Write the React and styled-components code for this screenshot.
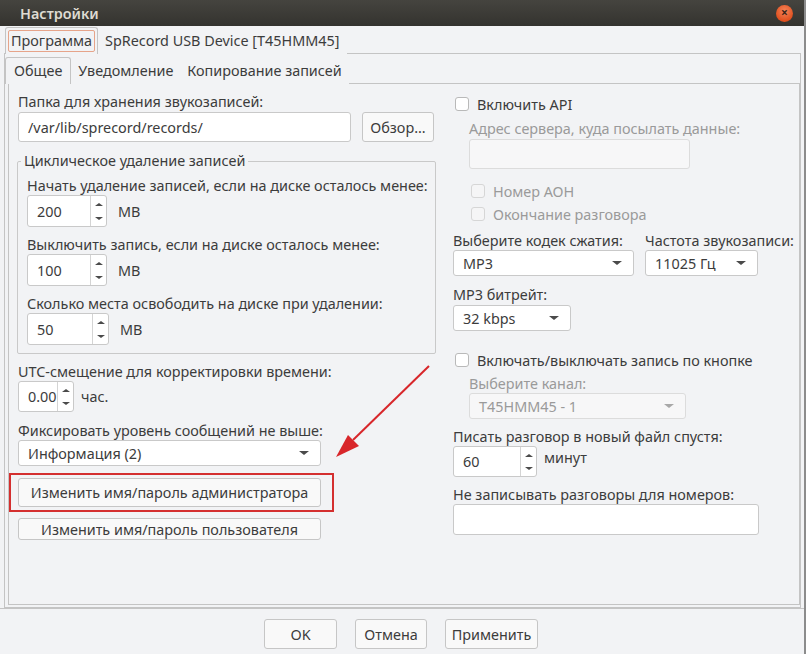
import React from "react";
import styled, { createGlobalStyle } from "styled-components";

const GlobalStyle = createGlobalStyle`
  html, body {
    margin: 0;
    padding: 0;
    background: #f2f3f5;
  }
  body {
    font-family: "Noto Sans", "Open Sans", sans-serif;
    font-size: 14.4px;
    color: #3c3c3c;
  }
  * {
    box-sizing: border-box;
  }
`;

const Window = styled.div`
  position: relative;
  width: 806px;
  height: 654px;
  display: flex;
  flex-direction: column;
  background: #f2f3f5;
  border-right: 2px solid #8c8c8c;
  overflow: hidden;
`;

const TitleBar = styled.div`
  height: 26px;
  flex: none;
  display: flex;
  align-items: center;
  justify-content: space-between;
  padding: 0 11px 0 20px;
  background: linear-gradient(#45443f, #34332f);
  color: #dfdbd2;
  font-weight: 600;
  font-size: 14.4px;
`;

const CloseBtn = styled.div`
  width: 17px;
  height: 17px;
  border-radius: 50%;
  background: radial-gradient(circle at 50% 35%, #f4845a, #e0501f 70%);
  display: flex;
  align-items: center;
  justify-content: center;
  color: #3b2419;
  font-size: 12px;
  font-weight: 700;
  line-height: 1;
`;

const TabBar = styled.div`
  display: flex;
  align-items: flex-end;
  height: ${(p) => p.$h}px;
  padding-left: ${(p) => p.$pl}px;
  flex: none;
`;

const Tab = styled.div`
  height: ${(p) => p.$h}px;
  display: flex;
  align-items: center;
  padding: 0 ${(p) => (p.$active ? 2 : 5)}px;
  border: 1px solid ${(p) => (p.$active ? "#c4c4c4" : "transparent")};
  border-bottom: none;
  border-radius: 3px 3px 0 0;
  background: #f2f3f5;
  margin-bottom: -1px;
  position: relative;
  z-index: 1;
  white-space: nowrap;
`;

const TabText = styled.span`
  padding: 1px ${(p) => p.$pad}px;
  border: 1px solid ${(p) => (p.$focus ? "#e6a48a" : "transparent")};
  border-radius: 2px;
  line-height: 18px;
`;

const OuterPane = styled.div`
  flex: 1;
  margin: 0 3px 0 4px;
  border: 1px solid #c4c4c4;
  display: flex;
  flex-direction: column;
`;

const InnerPane = styled.div`
  position: relative;
  flex: 1;
  margin: 0 0 2px 3px;
  border: 1px solid #c4c4c4;
  display: grid;
  grid-template-columns: 417px 1fr;
  column-gap: 18px;
  padding: 9px 0 0 9px;
`;

const Column = styled.div`
  display: flex;
  flex-direction: column;
  align-items: flex-start;
`;

const Label = styled.div`
  line-height: 18px;
  height: 18px;
  white-space: nowrap;
  margin-top: ${(p) => p.$mt || 0}px;
  margin-left: ${(p) => p.$ml || 0}px;
  color: ${(p) => (p.$disabled ? "#9a9a9a" : "#3c3c3c")};
`;

const Row = styled.div`
  display: flex;
  align-items: ${(p) => p.$align || "center"};
  gap: ${(p) => p.$gap || 0}px;
  margin-top: ${(p) => p.$mt || 0}px;
  margin-left: ${(p) => p.$ml || 0}px;
`;

const TextInput = styled.div`
  width: ${(p) => p.$w}px;
  height: ${(p) => p.$h}px;
  margin-top: ${(p) => p.$mt || 0}px;
  margin-left: ${(p) => p.$ml || 0}px;
  background: ${(p) => (p.$disabled ? "#f7f7f8" : "#fff")};
  border: 1px solid ${(p) => (p.$disabled ? "#dcdcdc" : "#c9c9c9")};
  border-radius: 3px;
  display: flex;
  align-items: center;
  padding-left: 9px;
`;

const Button = styled.div`
  width: ${(p) => p.$w}px;
  height: ${(p) => p.$h}px;
  margin-top: ${(p) => p.$mt || 0}px;
  background: #f9f9f9;
  border: 1px solid #c6c6c6;
  border-radius: 3px;
  display: flex;
  align-items: center;
  justify-content: center;
  white-space: nowrap;
`;

const Group = styled.fieldset`
  margin: 10px 0 0 -1px;
  width: 419px;
  padding: 7px 9px 8px 9px;
  border: 1px solid #c9c9c9;
  border-radius: 2px;
  display: flex;
  flex-direction: column;
  align-items: flex-start;
  min-width: 0;
`;

const Legend = styled.legend`
  padding: 0 3px;
  margin-left: -6px;
  line-height: 18px;
`;

const SpinBox = styled.div`
  width: ${(p) => p.$w}px;
  height: ${(p) => p.$h}px;
  background: #fff;
  border: 1px solid #c9c9c9;
  border-radius: 3px;
  display: flex;
  overflow: hidden;
`;

const SpinValue = styled.div`
  flex: 1;
  display: flex;
  align-items: center;
  padding-left: 9px;
  overflow: hidden;
  white-space: nowrap;
`;

const SpinArrows = styled.div`
  width: 16px;
  flex: none;
  border-left: 1px solid #d4d4d4;
  display: flex;
  flex-direction: column;
  align-items: center;
  justify-content: space-between;
  padding: 7px 0 6px;
`;

const Tri = styled.div`
  width: 0;
  height: 0;
  border-left: ${(p) => p.$s}px solid transparent;
  border-right: ${(p) => p.$s}px solid transparent;
  ${(p) => (p.$up ? "border-bottom" : "border-top")}: ${(p) => p.$s - 1}px solid
    ${(p) => p.$color || "#4a4a4a"};
`;

const Combo = styled.div`
  width: ${(p) => p.$w}px;
  height: 26px;
  margin-left: ${(p) => p.$ml || 0}px;
  background: ${(p) => (p.$disabled ? "#f7f7f8" : "#fff")};
  border: 1px solid ${(p) => (p.$disabled ? "#dcdcdc" : "#c9c9c9")};
  border-radius: 3px;
  display: flex;
  align-items: center;
  justify-content: space-between;
  padding: 0 11px 0 9px;
  color: ${(p) => (p.$disabled ? "#9a9a9a" : "#3c3c3c")};
  white-space: nowrap;
`;

const CheckRow = styled.div`
  display: flex;
  align-items: center;
  height: 18px;
  margin-top: ${(p) => p.$mt || 0}px;
  margin-left: ${(p) => p.$ml || 0}px;
  color: ${(p) => (p.$disabled ? "#9a9a9a" : "#3c3c3c")};
  white-space: nowrap;
`;

const CheckBox = styled.div`
  width: 14px;
  height: 14px;
  margin-right: 8px;
  border-radius: 3px;
  background: ${(p) => (p.$disabled ? "#f5f5f6" : "#fff")};
  border: 1px solid ${(p) => (p.$disabled ? "#d6d6d6" : "#b9b9b9")};
`;

const Unit = styled.span`
  margin-left: ${(p) => p.$ml}px;
  margin-top: ${(p) => p.$mt || 0}px;
`;

const Highlight = styled.div`
  margin: 7px 0 0 -9px;
  padding: 3px 11px 3px 7px;
  border: 2px solid #d42f2f;
`;

const Field = styled.div`
  display: flex;
  flex-direction: column;
  align-items: flex-start;
`;

const Annotation = styled.svg`
  position: absolute;
  left: 320px;
  top: 280px;
  pointer-events: none;
`;

const Footer = styled.div`
  height: 46px;
  flex: none;
  border-top: 1px solid #c4c4c4;
  display: flex;
  justify-content: center;
  align-items: flex-start;
  padding-top: 10px;
  padding-right: 2px;
  gap: 18px;
`;

const Spin = ({ w, h = 32, value }) => (
  <SpinBox $w={w} $h={h}>
    <SpinValue>{value}</SpinValue>
    <SpinArrows>
      <Tri $up $s={4} />
      <Tri $s={4} />
    </SpinArrows>
  </SpinBox>
);

const Select = ({ w, value, disabled, ml }) => (
  <Combo $w={w} $disabled={disabled} $ml={ml}>
    <span>{value}</span>
    <Tri $s={5} $color={disabled ? "#a8a8a8" : "#4a4a4a"} />
  </Combo>
);

const Check = ({ label, disabled, mt, ml }) => (
  <CheckRow $mt={mt} $ml={ml} $disabled={disabled}>
    <CheckBox $disabled={disabled} />
    {label}
  </CheckRow>
);

export default function App() {
  return (
    <Window>
      <GlobalStyle />
      <TitleBar>
        <span>Настройки</span>
        <CloseBtn>×</CloseBtn>
      </TitleBar>

      <TabBar $h={27} $pl={5}>
        <Tab $active $h={27}>
          <TabText $focus $pad={2}>Программа</TabText>
        </Tab>
        <Tab $h={27}>
          <TabText $pad={0}>SpRecord USB Device [T45HMM45]</TabText>
        </Tab>
      </TabBar>

      <OuterPane>
        <TabBar $h={29} $pl={0}>
          <Tab $active $h={27}>
            <TabText $pad={5}>Общее</TabText>
          </Tab>
          <Tab $h={27}>
            <TabText $pad={0}>Уведомление</TabText>
          </Tab>
          <Tab $h={27}>
            <TabText $pad={0}>Копирование записей</TabText>
          </Tab>
        </TabBar>

        <InnerPane>
          <Column>
            <Label>Папка для хранения звукозаписей:</Label>
            <Row $mt={1} $gap={11}>
              <TextInput $w={333} $h={30}>
                /var/lib/sprecord/records/
              </TextInput>
              <Button $w={72} $h={30}>
                Обзор...
              </Button>
            </Row>

            <Group>
              <Legend>Циклическое удаление записей</Legend>
              <Label>Начать удаление записей, если на диске осталось менее:</Label>
              <Row>
                <Spin w={80} value="200" />
                <Unit $ml={11}>MB</Unit>
              </Row>
              <Label $mt={9}>Выключить запись, если на диске осталось менее:</Label>
              <Row>
                <Spin w={80} value="100" />
                <Unit $ml={11}>MB</Unit>
              </Row>
              <Label $mt={9}>Сколько места освободить на диске при удалении:</Label>
              <Row>
                <Spin w={82} value="50" />
                <Unit $ml={11}>MB</Unit>
              </Row>
            </Group>

            <Label $mt={9}>UTC-смещение для корректировки времени:</Label>
            <Row>
              <Spin w={56} h={31} value="0.00" />
              <Unit $ml={7}>час.</Unit>
            </Row>

            <Label $mt={10}>Фиксировать уровень сообщений не выше:</Label>
            <Select w={303} value="Информация (2)" />

            <Highlight>
              <Button $w={303} $h={29}>
                Изменить имя/пароль администратора
              </Button>
            </Highlight>
            <Button $w={303} $h={22} $mt={6}>
              Изменить имя/пароль пользователя
            </Button>
          </Column>

          <Column>
            <Check label="Включить API" mt={2} ml={2} />
            <Label $mt={7} $ml={16} $disabled>
              Адрес сервера, куда посылать данные:
            </Label>
            <TextInput $w={221} $h={30} $mt={1} $ml={16} $disabled />
            <Check label="Номер АОН" mt={13} ml={18} disabled />
            <Check label="Окончание разговора" mt={5} ml={18} disabled />

            <Row $mt={9} $gap={11} $align="flex-start">
              <Field>
                <Label>Выберите кодек сжатия:</Label>
                <Select w={181} value="MP3" />
              </Field>
              <Field>
                <Label>Частота звукозаписи:</Label>
                <Select w={113} value="11025 Гц" />
              </Field>
            </Row>

            <Label $mt={10}>MP3 битрейт:</Label>
            <Row $mt={1}>
              <Select w={118} value="32 kbps" />
            </Row>

            <Check label="Включать/выключать запись по кнопке" mt={20} ml={2} />
            <Label $mt={6} $ml={16} $disabled>
              Выберите канал:
            </Label>
            <Select w={217} ml={16} value="T45HMM45 - 1" disabled />

            <Label $mt={9}>Писать разговор в новый файл спустя:</Label>
            <Row $align="flex-start">
              <Spin w={84} h={31} value="60" />
              <Unit $ml={7} $mt={2}>минут</Unit>
            </Row>

            <Label $mt={9}>Не записывать разговоры для номеров:</Label>
            <TextInput $w={306} $h={31} />
          </Column>

          <Annotation width="120" height="120" viewBox="0 0 120 120">
            <line x1="100" y1="2" x2="24" y2="76" stroke="#d8262a" strokeWidth="2" />
            <polygon points="7,93 30,82 19,71" fill="#d8262a" />
          </Annotation>
        </InnerPane>
      </OuterPane>

      <Footer>
        <Button $w={73} $h={30}>OK</Button>
        <Button $w={72} $h={30}>Отмена</Button>
        <Button $w={93} $h={30}>Применить</Button>
      </Footer>
    </Window>
  );
}
